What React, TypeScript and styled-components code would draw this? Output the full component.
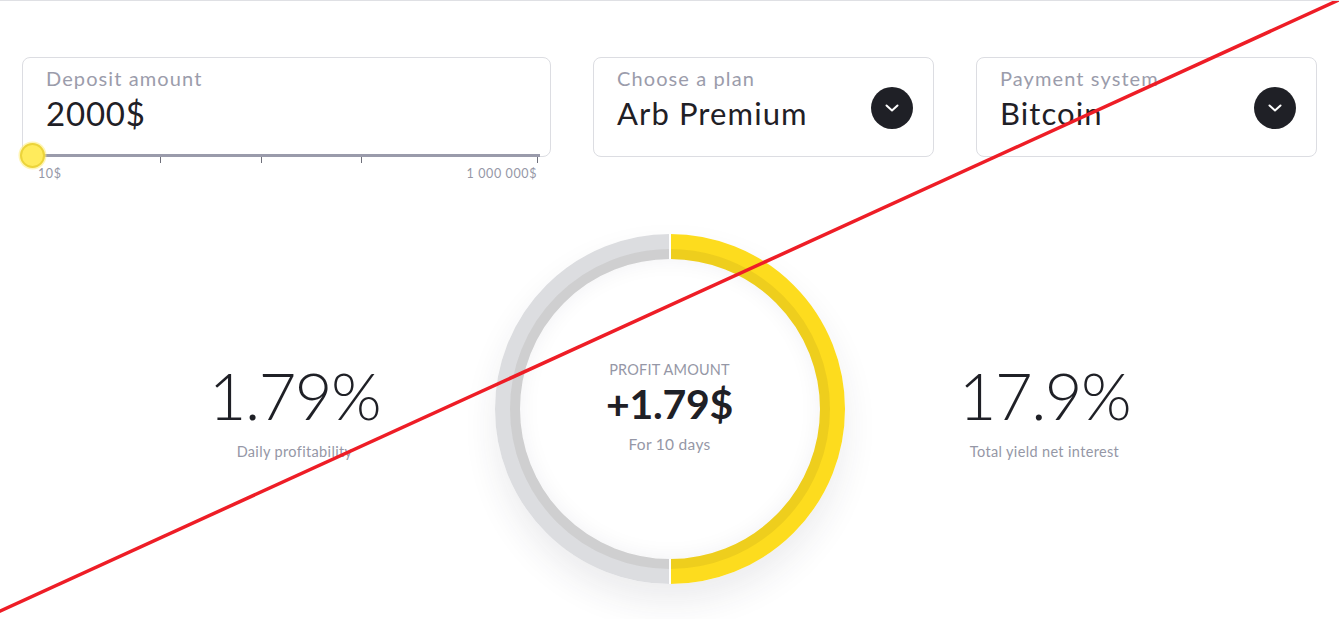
import React from "react";
import styled, { createGlobalStyle } from "styled-components";

const GlobalStyle = createGlobalStyle`
  html, body { margin: 0; padding: 0; background: #fff; }
  body { font-family: Lato, "Open Sans", sans-serif; color: #1f2026; }
  * { box-sizing: border-box; }
`;

const Page = styled.div`
  position: relative;
  width: 1339px;
  height: 619px;
  overflow: hidden;
  border-top: 1px solid #dfe0e4;
  padding: 56px 22px 0;
`;

const Controls = styled.div`
  display: grid;
  grid-template-columns: 529px 341px 341px;
  column-gap: 42px;
`;

const Field = styled.div`
  height: 100px;
  border: 1px solid #dcdde2;
  border-radius: 8px;
  padding: 8px 20px 0 23px;
  display: flex;
  align-items: center;
  justify-content: space-between;
`;

const FieldText = styled.div`
  display: flex;
  flex-direction: column;
  align-self: flex-start;
`;

const Label = styled.div`
  font-size: 20px;
  line-height: 24px;
  color: #9b9cab;
  letter-spacing: 1.1px;
`;

const Value = styled.div<{ $size?: number; $spacing?: number }>`
  font-size: ${(p) => p.$size ?? 31}px;
  line-height: 40px;
  margin-top: 3px;
  color: #1f2026;
  letter-spacing: ${(p) => p.$spacing ?? 1.1}px;
`;

const RoundButton = styled.div`
  width: 42px;
  height: 42px;
  border-radius: 50%;
  background: #1f2026;
  display: flex;
  align-items: center;
  justify-content: center;
  margin-top: -6px;
`;

const SliderBox = styled.div`
  position: relative;
  height: 26px;
  margin-top: -3px;
  width: 518px;
`;

const Track = styled.div`
  height: 3px;
  background: #9a9bab;
`;

const Tick = styled.div<{ $left: number }>`
  position: absolute;
  top: 3px;
  left: ${(p) => p.$left}px;
  width: 1px;
  height: 6px;
  background: #6e6f7a;
`;

const Thumb = styled.div`
  position: absolute;
  left: -2px;
  top: -11px;
  width: 25px;
  height: 25px;
  border-radius: 50%;
  background: #ffeb5c;
  border: 2px solid #ecd43a;
  box-shadow: 0 0 0 1.5px rgba(255, 236, 120, 0.55);
`;

const SliderLabels = styled.div`
  display: flex;
  justify-content: space-between;
  padding: 9px 3px 0 16px;
  font-size: 12.5px;
  letter-spacing: 0.6px;
  color: #9597a6;
`;

const Stats = styled.div`
  display: grid;
  grid-template-columns: repeat(3, 375px);
  justify-content: center;
  align-items: center;
  margin-top: 54px;
`;

const Stat = styled.div`
  display: flex;
  flex-direction: column;
  align-items: center;
  margin-top: 2px;
`;

const BigNumber = styled.div`
  font-size: 65px;
  font-weight: 300;
  line-height: 70px;
  color: #1f2026;
  letter-spacing: -1.5px;
`;

const Caption = styled.div`
  font-size: 14.5px;
  color: #9597a6;
  margin-top: 13px;
  letter-spacing: 0.35px;
`;

const RingWrap = styled.div`
  position: relative;
  width: 350px;
  height: 350px;
  justify-self: center;
  border-radius: 50%;
  box-shadow: 0 18px 34px rgba(40, 40, 70, 0.09);
`;

const RingCenter = styled.div`
  position: absolute;
  inset: 25px;
  border-radius: 50%;
  box-shadow: inset 0 0 22px rgba(40, 40, 70, 0.06);
  display: flex;
  flex-direction: column;
  align-items: center;
  justify-content: center;
  padding-bottom: 4px;
`;

const SmallCaps = styled.div`
  font-size: 14.5px;
  color: #9597a6;
  text-transform: uppercase;
  letter-spacing: 0.2px;
`;

const Profit = styled.div`
  font-size: 41px;
  font-weight: 700;
  line-height: 52px;
  color: #1f2026;
  letter-spacing: -0.3px;
`;

const SubCaption = styled.div`
  font-size: 15.5px;
  color: #9597a6;
  letter-spacing: 0.3px;
  margin-top: 5px;
`;

const Strike = styled.svg`
  position: absolute;
  left: 0;
  top: -1px;
  pointer-events: none;
`;

const Chevron = () => (
  <svg width="14" height="8" viewBox="0 0 14 8" fill="none">
    <path d="M1.5 1.5 L7 6.5 L12.5 1.5" stroke="#fff" strokeWidth="2" strokeLinecap="round" strokeLinejoin="round" />
  </svg>
);

const Ring = () => (
  <svg width="350" height="350" viewBox="0 0 350 350" style={{ position: "absolute", inset: 0 }}>
    <path d="M175 12.5 A162.5 162.5 0 0 0 175 337.5" stroke="#dcdde0" strokeWidth="25" fill="none" />
    <path d="M175 12.5 A162.5 162.5 0 0 1 175 337.5" stroke="#fddc1e" strokeWidth="25" fill="none" />
    <circle cx="175" cy="175" r="155" stroke="rgba(60,50,20,0.08)" strokeWidth="10" fill="none" />
    <rect x="174" y="0" width="2" height="26" fill="#fff" />
    <rect x="174" y="324" width="2" height="26" fill="#fff" />
  </svg>
);

export default function App() {
  return (
    <>
      <GlobalStyle />
      <Page>
        <Controls>
          <div>
            <Field>
              <FieldText>
                <Label>Deposit amount</Label>
                <Value $size={33} $spacing={0.8}>2000$</Value>
              </FieldText>
            </Field>
            <SliderBox>
              <Track />
              <Tick $left={138} />
              <Tick $left={239} />
              <Tick $left={339} />
              <Tick $left={515} />
              <Thumb />
              <SliderLabels>
                <span>10$</span>
                <span>1 000 000$</span>
              </SliderLabels>
            </SliderBox>
          </div>
          <Field>
            <FieldText>
              <Label>Choose a plan</Label>
              <Value>Arb Premium</Value>
            </FieldText>
            <RoundButton>
              <Chevron />
            </RoundButton>
          </Field>
          <Field>
            <FieldText>
              <Label>Payment system</Label>
              <Value>Bitcoin</Value>
            </FieldText>
            <RoundButton>
              <Chevron />
            </RoundButton>
          </Field>
        </Controls>
        <Stats>
          <Stat>
            <BigNumber>1.79%</BigNumber>
            <Caption>Daily profitability</Caption>
          </Stat>
          <RingWrap>
            <Ring />
            <RingCenter>
              <SmallCaps>Profit amount</SmallCaps>
              <Profit>+1.79$</Profit>
              <SubCaption>For 10 days</SubCaption>
            </RingCenter>
          </RingWrap>
          <Stat>
            <BigNumber>17.9%</BigNumber>
            <Caption>Total yield net interest</Caption>
          </Stat>
        </Stats>
        <Strike width="1339" height="620" viewBox="0 0 1339 620">
          <line x1="-2" y1="612" x2="1341" y2="-1" stroke="#ee1d26" strokeWidth="3.5" />
        </Strike>
      </Page>
    </>
  );
}
